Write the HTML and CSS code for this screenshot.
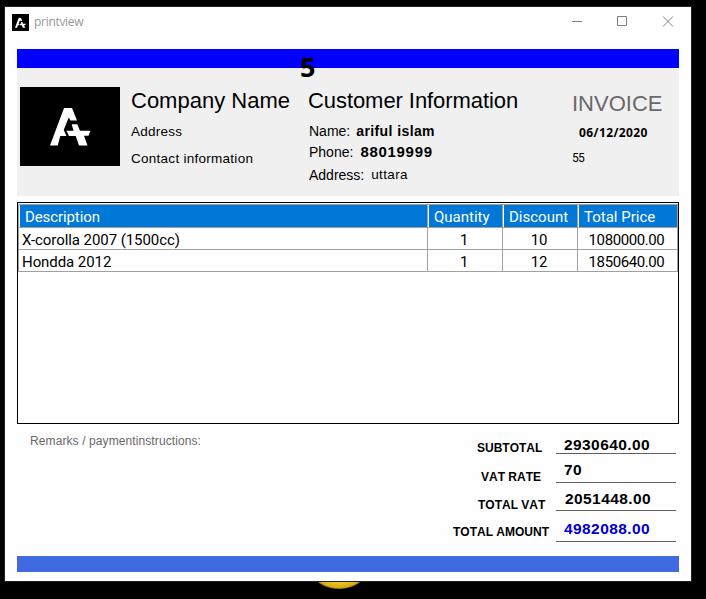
FILE: index.html
```html
<!DOCTYPE html>
<html lang="en">
<head>
<meta charset="utf-8">
<title>printview</title>
<link rel="stylesheet" href="styles.css">
</head>
<body>
<svg width="0" height="0" class="defs"><symbol id="logo" viewBox="0 0 41 38"><path fill="#fff" d="M14 0h8l5 12.500h-6.500l-1.800-3-5 12.500 2.800 6h-6.200L7.700 37.500H0z"/><path fill="#fff" d="M21.700 16.300h5.600l2.700 6.400h10.500l-2 5H34l3.500 9.800H29L25.700 28H19l-2.500-5.300h7z"/></symbol></svg>
<div class="glow"></div>
<main class="window">
  <header class="titlebar">
    <svg class="app-icon" viewBox="0 0 17 17"><path d="M0 0h17v17H0z"/><use href="#logo" x="3" y="3.500" width="11" height="10.500"/></svg>
    <span class="app-name">printview</span>
    <svg class="controls" width="102" height="11" fill="none" stroke="#808080"><path d="M0 5.500h10M45.500.500h9v9h-9zM91 .500l10 10M101 .500l-10 10"/></svg>
  </header>
  <div class="topbar"><b class="number">5</b></div>
  <section class="info">
    <div class="logo-box"><svg width="41" height="38"><use href="#logo"/></svg></div>
    <div class="company">
      <h1>Company Name</h1>
      <p class="address">Address</p>
      <p class="contact">Contact information</p>
    </div>
    <div class="customer">
      <h1>Customer Information</h1>
      <p class="name"><span class="label">Name:</span><b>ariful islam</b></p>
      <p class="phone"><span class="label">Phone:</span><b>88019999</b></p>
      <p class="home"><span class="label">Address:</span><span class="place">uttara</span></p>
    </div>
    <div class="invoice">
      <h2>INVOICE</h2>
      <p class="date"><b>06/12/2020</b></p>
      <p class="ref">55</p>
    </div>
  </section>
  <section class="grid">
    <div class="row head"><span class="cell">Description</span><span class="cell">Quantity</span><span class="cell">Discount</span><span class="cell">Total Price</span></div>
    <div class="row"><span class="cell">X-corolla 2007 (1500cc)</span><span class="cell">1</span><span class="cell">10</span><span class="cell">1080000.00</span></div>
    <div class="row"><span class="cell">Hondda 2012</span><span class="cell">1</span><span class="cell">12</span><span class="cell">1850640.00</span></div>
  </section>
  <section class="summary">
    <p class="remarks">Remarks / paymentinstructions:</p>
    <div class="totals">
      <div class="total subtotal"><b class="caption">SUBTOTAL</b><b class="value">2930640.00</b></div>
      <div class="total rate"><b class="caption">VAT RATE</b><b class="value">70</b></div>
      <div class="total vat"><b class="caption">TOTAL VAT</b><b class="value">2051448.00</b></div>
      <div class="total amount"><b class="caption">TOTAL AMOUNT</b><b class="value">4982088.00</b></div>
    </div>
  </section>
  <footer class="bottombar"></footer>
</main>
</body>
</html>
```
FILE: styles.css
```css
* { box-sizing: border-box; margin: 0; padding: 0; }
body { width: 706px; height: 599px; overflow: hidden; background: #000; padding: 7px 0 0 5px; font-family: "Liberation Sans", Arial, sans-serif; font-size: 14px; color: #000; position: relative; white-space: nowrap; }
.defs { position: absolute; }
.glow { position: absolute; left: 311px; top: 549px; width: 56px; height: 40px; border-radius: 50%; background: radial-gradient(#f2cf2c 40%, #d5ab16 66%, #6e5208 71%); }
.window { position: relative; width: 686px; height: 574px; background: #fefefe; padding: 0 12px; box-shadow: 0 0 0 1px #222; }
.titlebar { height: 42px; display: flex; align-items: flex-start; margin-left: -5px; }
.app-icon { width: 17px; height: 17px; margin-top: 7px; }
.app-name { font: 12px/16px "Open Sans", sans-serif; color: #999; margin: 7px 0 0 5px; letter-spacing: -.3px; }
.controls { margin: 9px 5px 0 auto; }
.topbar { position: relative; height: 19px; background: #00f; }
.number { position: absolute; left: 283px; top: 2px; font: bold 27px/32px "Noto Sans", sans-serif; }
.info { height: 128px; background: #f0f0f0; display: flex; padding-left: 3px; }
.logo-box { width: 100px; height: 79px; background: #000; margin-top: 19px; padding: 21px 0 0 30px; }
.company { width: 177px; margin-left: 11px; padding-top: 20px; }
.customer { width: 264px; padding-top: 20px; }
h1 { font-size: 22px; line-height: 25px; font-weight: normal; }
.customer h1 { letter-spacing: -.07px; }
.address { font-size: 13.5px; line-height: 16px; margin-top: 11px; letter-spacing: .25px; }
.contact { font-size: 13.5px; line-height: 16px; margin-top: 11px; letter-spacing: .27px; }
.customer p { display: flex; margin-left: 1px; line-height: 16px; }
.customer .name { margin-top: 10px; }
.customer .phone { margin-top: 5px; }
.customer .home { margin-top: 7px; }
.name b { margin-left: 6px; letter-spacing: .4px; }
.phone b { margin-left: 7px; font-size: 15px; letter-spacing: .7px; }
.place { margin-left: 7px; font-size: 13.5px; letter-spacing: .35px; }
.invoice { padding-top: 23px; }
h2 { font-size: 22px; line-height: 26px; font-weight: normal; color: #696969; }
.date { margin: 8px 0 0 7px; font: 12px/16px "Noto Sans", sans-serif; letter-spacing: .4px; }
.ref { margin-top: 9px; font: 12px/16px Roboto, sans-serif; letter-spacing: -.7px; }
.grid { height: 222px; margin-top: 6px; border: 1px solid #000; padding-top: 1px; background: #fff; }
.row { display: grid; grid-template-columns: 409px 75px 75px 100px; height: 22px; border-left: 1px solid #a0a0a0; }
.cell { border: solid #a0a0a0; border-width: 0 1px 1px 0; font: 15px/25px Roboto, sans-serif; height: 22px; text-align: center; padding-right: 2px; letter-spacing: -.2px; }
.cell:first-child { text-align: left; padding-left: 3px; letter-spacing: -.07px; }
.row:not(.head) .cell:last-child { letter-spacing: -.4px; }
.head { height: 24px; }
.head .cell { height: 24px; background: #0078d7; color: #fff; line-height: 24px; text-align: left; padding-left: 6px; border-top: 1px solid #a0a0a0; box-shadow: inset 1px 0 #fff; letter-spacing: 0; }
.head .cell:first-child { letter-spacing: -.1px; }
.summary { height: 132px; display: flex; justify-content: space-between; padding: 9px 3px 0 13px; }
.remarks { font-size: 12px; line-height: 16px; color: #696969; letter-spacing: .1px; }
.total { display: flex; align-items: flex-end; }
.caption { width: 103px; font-size: 12px; line-height: 16px; font-kerning: none; position: relative; }
.value { width: 120px; border-bottom: 1px solid #606060; padding-left: 8px; font-size: 15.5px; line-height: 16px; letter-spacing: .42px; }
.subtotal { height: 21px; }
.subtotal .caption { padding-left: 24px; top: 2px; }
.rate { height: 29px; }
.rate .caption { padding-left: 28px; top: 2px; }
.rate .value { padding-bottom: 4px; }
.vat { height: 28px; }
.vat .caption { padding-left: 25px; top: 2px; }
.vat .value { padding: 0 0 3px 9px; }
.amount { height: 31px; }
.amount .caption { top: -2px; }
.amount .value { color: #0000cd; padding-bottom: 4px; }
.bottombar { height: 16px; background: #4169e1; }
```
